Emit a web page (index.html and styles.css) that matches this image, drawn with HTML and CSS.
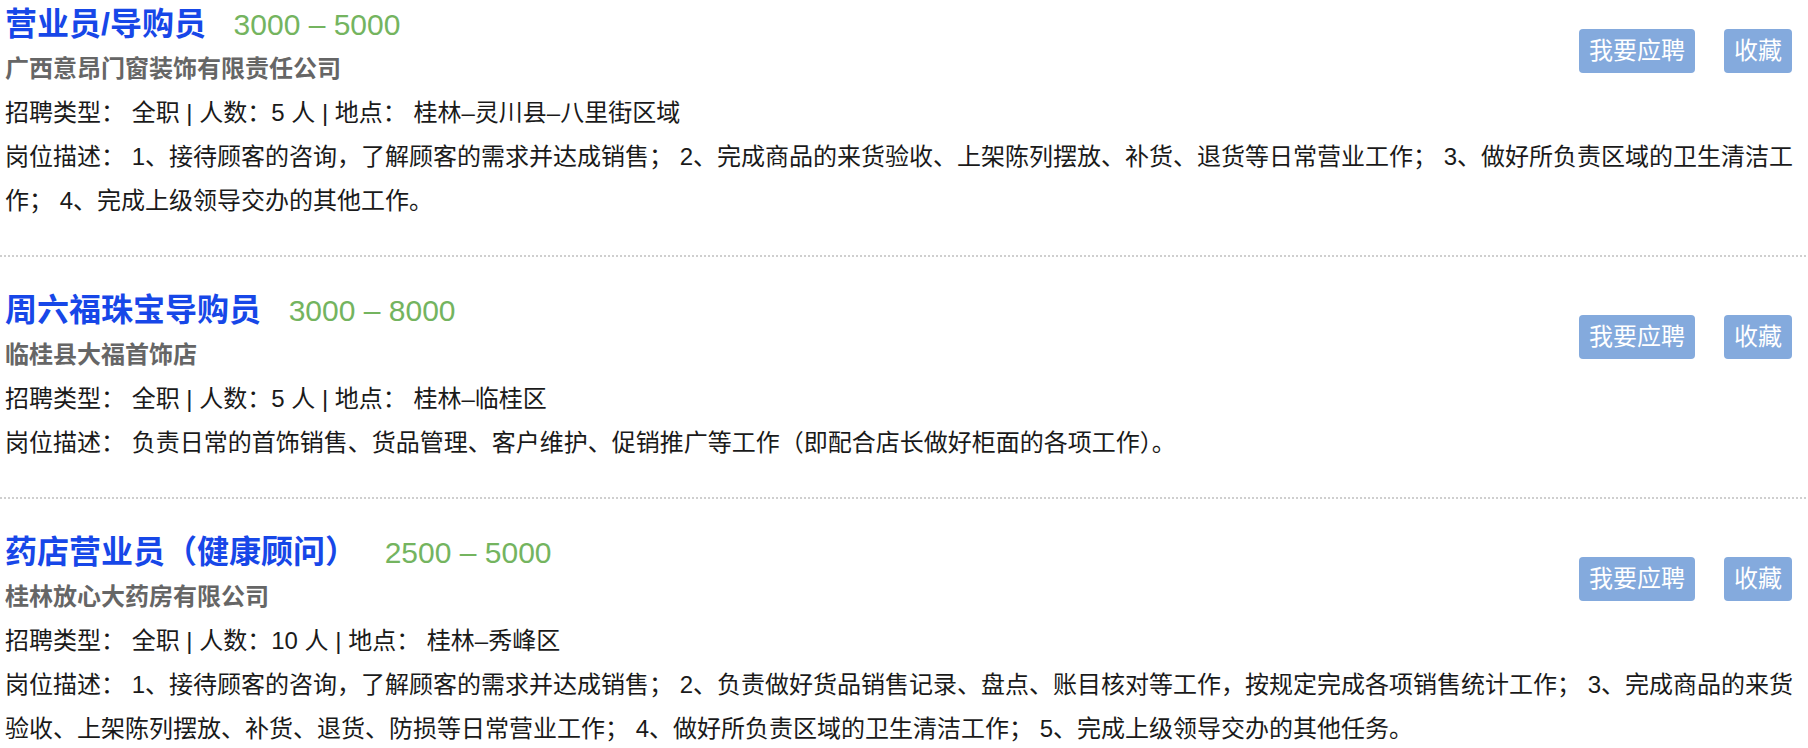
FILE: index.html
```html
<!DOCTYPE html>
<html lang="zh-CN">
<head>
<meta charset="utf-8">
<title>职位列表</title>
<link rel="stylesheet" href="styles.css">
</head>
<body>
<ul class="job-list">
  <li class="job">
    <div class="actions">
      <a class="btn" href="#">我要应聘</a>
      <a class="btn" href="#">收藏</a>
    </div>
    <div class="job-head">
      <a class="job-title" href="#">营业员/导购员</a>
      <span class="salary">3000 – 5000</span>
    </div>
    <div class="company">广西意昂门窗装饰有限责任公司</div>
    <div class="meta">招聘类型： 全职 | 人数：5 人 | 地点： 桂林–灵川县–八里街区域</div>
    <div class="desc">岗位描述： 1、接待顾客的咨询，了解顾客的需求并达成销售； 2、完成商品的来货验收、上架陈列摆放、补货、退货等日常营业工作； 3、做好所负责区域的卫生清洁工作； 4、完成上级领导交办的其他工作。</div>
  </li>
  <li class="job">
    <div class="actions">
      <a class="btn" href="#">我要应聘</a>
      <a class="btn" href="#">收藏</a>
    </div>
    <div class="job-head">
      <a class="job-title" href="#">周六福珠宝导购员</a>
      <span class="salary">3000 – 8000</span>
    </div>
    <div class="company">临桂县大福首饰店</div>
    <div class="meta">招聘类型： 全职 | 人数：5 人 | 地点： 桂林–临桂区</div>
    <div class="desc">岗位描述： 负责日常的首饰销售、货品管理、客户维护、促销推广等工作（即配合店长做好柜面的各项工作）。</div>
  </li>
  <li class="job">
    <div class="actions">
      <a class="btn" href="#">我要应聘</a>
      <a class="btn" href="#">收藏</a>
    </div>
    <div class="job-head">
      <a class="job-title" href="#">药店营业员（健康顾问）</a>
      <span class="salary">2500 – 5000</span>
    </div>
    <div class="company">桂林放心大药房有限公司</div>
    <div class="meta">招聘类型： 全职 | 人数：10 人 | 地点： 桂林–秀峰区</div>
    <div class="desc">岗位描述： 1、接待顾客的咨询，了解顾客的需求并达成销售； 2、负责做好货品销售记录、盘点、账目核对等工作，按规定完成各项销售统计工作； 3、完成商品的来货验收、上架陈列摆放、补货、退货、防损等日常营业工作； 4、做好所负责区域的卫生清洁工作； 5、完成上级领导交办的其他任务。</div>
  </li>
</ul>
</body>
</html>
```

FILE: styles.css
```css
html, body {
  margin: 0;
  padding: 0;
  background: #ffffff;
}

body {
  font-family: "Liberation Sans", "Noto Sans CJK SC", sans-serif;
  font-size: 24px;
  color: #1a1a1a;
}

.job-list {
  list-style: none;
  margin: 0;
  padding: 0;
}

.job {
  padding: 30px 0 34px 5px;
  background-image: linear-gradient(to right, #cfcfcf 50%, transparent 50%);
  background-size: 4px 2px;
  background-repeat: repeat-x;
  background-position: left bottom;
}

.job:first-child {
  padding-top: 1px;
}

.actions {
  float: right;
  display: flex;
  gap: 29px;
  margin: 28px 16px 0 20px;
}

.btn {
  display: block;
  height: 44px;
  line-height: 44px;
  padding: 0 10px;
  background: #84aadd;
  color: #ffffff;
  border-radius: 4px;
  text-decoration: none;
  font-size: 24px;
}

.job-head {
  line-height: 46px;
  height: 46px;
}

.job-title {
  font-size: 32px;
  font-weight: bold;
  color: #1747e8;
  text-decoration: none;
}

.salary {
  font-size: 30px;
  color: #74b45f;
  margin-left: 21px;
}

.company {
  line-height: 44px;
  font-weight: bold;
  color: #666666;
}

.meta,
.desc {
  line-height: 44px;
}
```
